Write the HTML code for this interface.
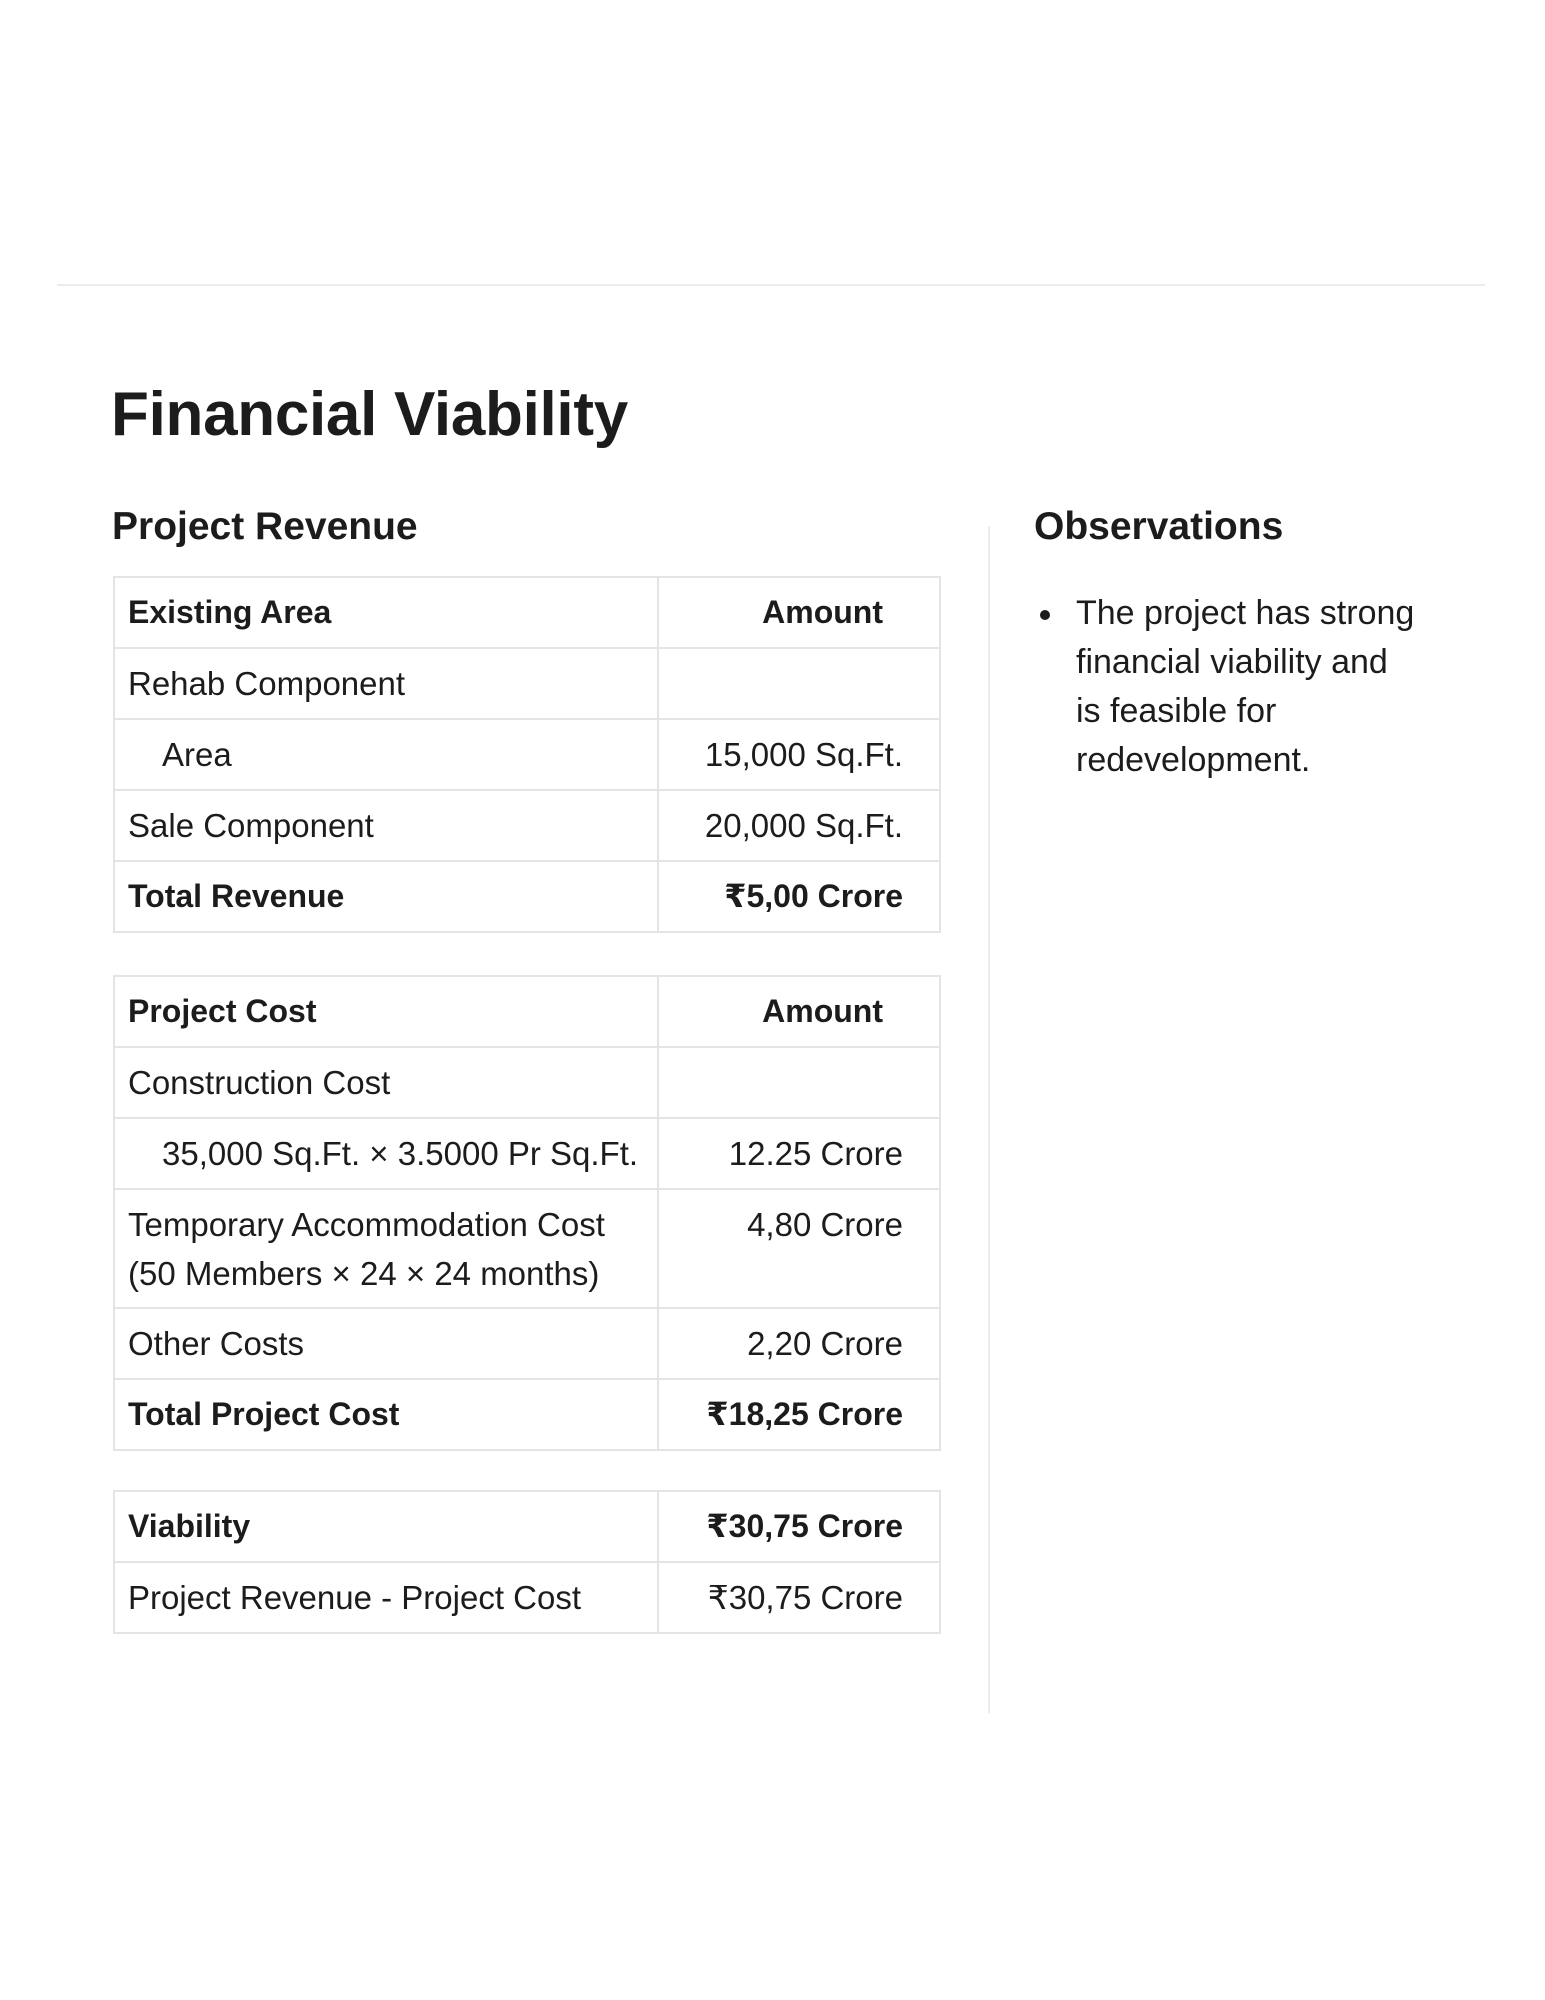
<!DOCTYPE html>
<html><head><meta charset="utf-8"><style>
*{margin:0;padding:0;box-sizing:border-box}
body{width:1545px;height:2000px;background:#fff;font-family:"Liberation Sans","DejaVu Sans",sans-serif;color:#1c1c1c;position:relative;overflow:hidden}
.hr{position:absolute;left:57px;width:1428px;top:284px;height:2px;background:#ececec}
h1{position:absolute;left:111px;top:380px;font-size:62px;font-weight:bold;line-height:70px;letter-spacing:-0.3px}
h2{position:absolute;font-size:39px;font-weight:bold;line-height:44px;top:505px}
.vl{position:absolute;left:988px;top:526px;width:2px;height:1187px;background:#ececec}
table{position:absolute;left:113px;width:826px;border-collapse:collapse;font-size:33px;table-layout:fixed}
td{border:2px solid #e4e4e4;height:71px;padding:0 36px 0 13px;vertical-align:middle;line-height:49px;white-space:nowrap;overflow:visible}
td:last-child{text-align:right}
.b{font-weight:bold;font-size:32px}
.ind{padding-left:47px}
.hd{padding-right:56px}
.tall td{vertical-align:top;padding-top:10px;height:119px}
ul{position:absolute;left:1076px;top:589px;list-style:none;font-size:34px;line-height:49px}
ul li{position:relative}
ul li:before{content:"";position:absolute;left:-36px;top:21px;width:10px;height:10px;border-radius:50%;background:#1c1c1c}
</style></head><body>
<div class="hr"></div>
<h1>Financial Viability</h1>
<h2 style="left:112px">Project Revenue</h2>
<h2 style="left:1034px">Observations</h2>
<div class="vl"></div>
<table style="top:576px"><colgroup><col style="width:544px"><col style="width:282px"></colgroup>
<tr><td class="b">Existing Area</td><td class="b hd">Amount</td></tr>
<tr><td>Rehab Component</td><td></td></tr>
<tr><td class="ind">Area</td><td>15,000 Sq.Ft.</td></tr>
<tr><td>Sale Component</td><td>20,000 Sq.Ft.</td></tr>
<tr><td class="b">Total Revenue</td><td class="b">₹5,00 Crore</td></tr>
</table>
<table style="top:975px"><colgroup><col style="width:544px"><col style="width:282px"></colgroup>
<tr><td class="b">Project Cost</td><td class="b hd">Amount</td></tr>
<tr><td>Construction Cost</td><td></td></tr>
<tr><td class="ind">35,000 Sq.Ft. × 3.5000 Pr Sq.Ft.</td><td>12.25 Crore</td></tr>
<tr class="tall"><td>Temporary Accommodation Cost<br>(50 Members × 24 × 24 months)</td><td>4,80 Crore</td></tr>
<tr><td>Other Costs</td><td>2,20 Crore</td></tr>
<tr><td class="b">Total Project Cost</td><td class="b">₹18,25 Crore</td></tr>
</table>
<table style="top:1490px"><colgroup><col style="width:544px"><col style="width:282px"></colgroup>
<tr><td class="b">Viability</td><td class="b">₹30,75 Crore</td></tr>
<tr><td>Project Revenue - Project Cost</td><td>₹30,75 Crore</td></tr>
</table>
<ul><li>The project has strong<br>financial viability and<br>is feasible for<br>redevelopment.</li></ul>
</body></html>
